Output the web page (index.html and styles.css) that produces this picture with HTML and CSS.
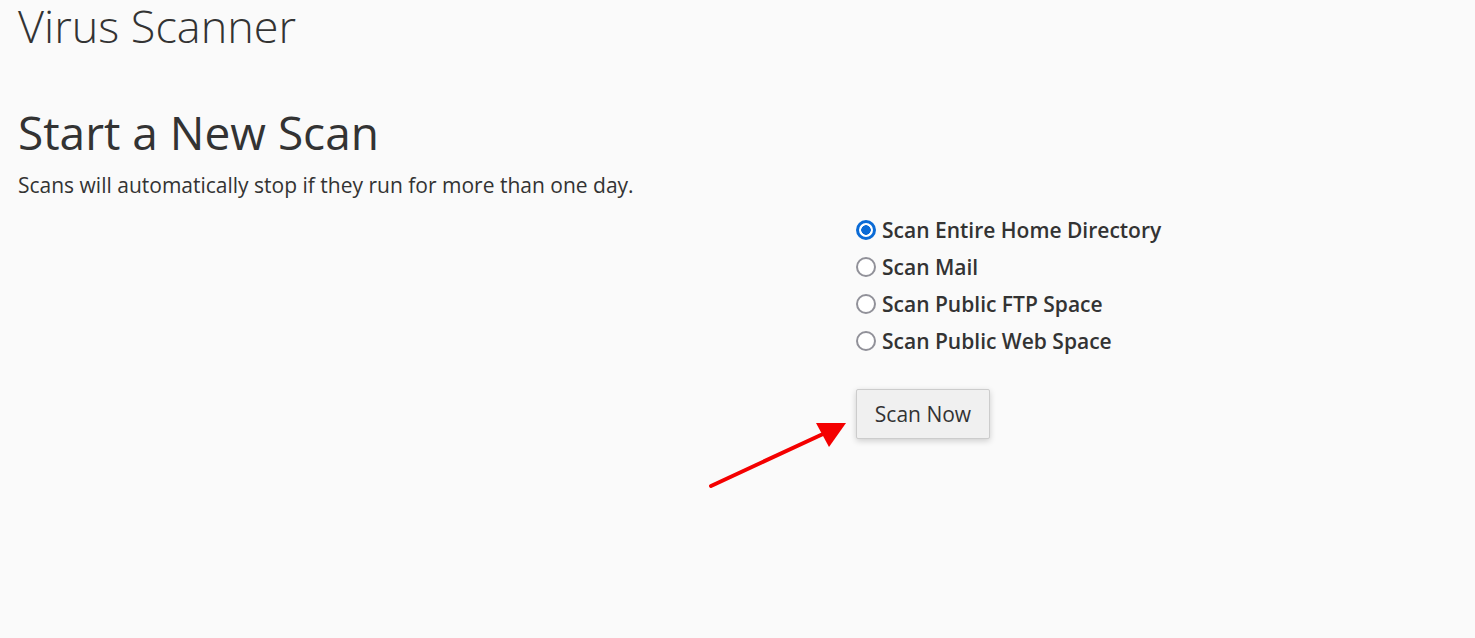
FILE: index.html
```html
<!DOCTYPE html>
<html>
<head>
<meta charset="utf-8">
<link rel="stylesheet" href="styles.css">
</head>
<body>
<div class="page">
  <h1 class="title">Virus Scanner</h1>
  <h2 class="section-title">Start a New Scan</h2>
  <p class="note">Scans will automatically stop if they run for more than one day.</p>
  <div class="form-row">
    <div class="spacer"></div>
    <form class="scan-form">
      <label class="option"><input type="radio" name="scan" checked><span>Scan Entire Home Directory</span></label>
      <label class="option"><input type="radio" name="scan"><span>Scan Mail</span></label>
      <label class="option"><input type="radio" name="scan"><span>Scan Public FTP Space</span></label>
      <label class="option"><input type="radio" name="scan"><span>Scan Public Web Space</span></label>
      <div class="actions">
        <button type="button" class="btn">Scan Now</button>
      </div>
    </form>
  </div>
  <svg class="annotation" width="160" height="80" viewBox="0 0 160 80">
    <line x1="12" y1="74" x2="124" y2="22" stroke="#f40000" stroke-width="4" stroke-linecap="round"/>
    <polygon points="117,11 147,11 130,35" fill="#f40000"/>
  </svg>
</div>
</body>
</html>
```
FILE: styles.css
```css
html, body {
  margin: 0;
  padding: 0;
  background: #fafafa;
}
body {
  font-family: "Open Sans", "Liberation Sans", sans-serif;
  color: #333;
}
.page {
  position: relative;
  padding: 0 18px;
  height: 638px;
  box-sizing: border-box;
}
.title {
  margin: 0;
  font-weight: 300;
  font-size: 45px;
  line-height: 52px;
  color: #333;
}
.section-title {
  margin: 52px 0 0;
  font-weight: 400;
  font-size: 46px;
  line-height: 56px;
}
.note {
  margin: 10px 0 0;
  font-size: 21px;
  line-height: 30px;
}
.form-row {
  display: flex;
  margin-top: 11px;
}
.spacer {
  width: 838px;
  flex: none;
}
.scan-form {
  display: flex;
  flex-direction: column;
}
.option {
  display: flex;
  align-items: center;
  height: 37px;
  font-size: 21px;
  font-weight: 600;
  color: #333;
}
.option input {
  appearance: none;
  -webkit-appearance: none;
  margin: 0 6px 0 0;
  width: 20px;
  height: 20px;
  border: 2.5px solid #919199;
  border-radius: 50%;
  background: #fff;
  box-sizing: border-box;
}
.option input:checked {
  border: 3px solid #0b6bd6;
  background: radial-gradient(circle, #0b6bd6 0 4.5px, #fff 5px);
}
.actions {
  margin-top: 30px;
}
.btn {
  font-family: "Open Sans", "Liberation Sans", sans-serif;
  font-size: 21px;
  color: #333;
  background: #f0f0f0;
  border: 1px solid #ccc;
  border-radius: 2px;
  width: 134px;
  height: 50px;
  padding: 0;
  box-shadow: 0 2px 6px rgba(0,0,0,0.18);
}
.annotation {
  position: absolute;
  left: 699px;
  top: 412px;
}
```
